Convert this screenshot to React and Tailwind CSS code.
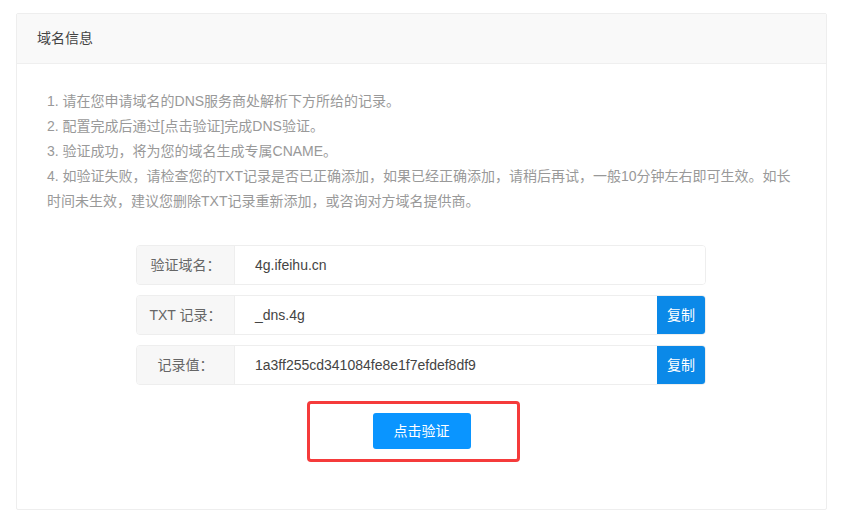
import React from "react";

const steps = [
  "1. 请在您申请域名的DNS服务商处解析下方所给的记录。",
  "2. 配置完成后通过[点击验证]完成DNS验证。",
  "3. 验证成功，将为您的域名生成专属CNAME。",
  "4. 如验证失败，请检查您的TXT记录是否已正确添加，如果已经正确添加，请稍后再试，一般10分钟左右即可生效。如长时间未生效，建议您删除TXT记录重新添加，或咨询对方域名提供商。",
];

const records = [
  { label: "验证域名：", value: "4g.ifeihu.cn", copy: false },
  { label: "TXT 记录：", value: "_dns.4g", copy: true },
  { label: "记录值：", value: "1a3ff255cd341084fe8e1f7efdef8df9", copy: true },
];

function RecordRow({ label, value, copy }) {
  return (
    <div className="flex h-[40px] rounded-[4px] border border-[#eeeeee] overflow-hidden">
      <div className="w-[98px] shrink-0 flex items-center justify-center bg-[#f7f7f7] border-r border-[#eeeeee] text-[14px] text-[#666]">
        {label}
      </div>
      <div className="flex-1 flex items-center pl-[20px] text-[14px] text-[#444] bg-white">
        {value}
      </div>
      {copy && (
        <button className="w-[48px] shrink-0 bg-[#0b89e8] text-white text-[14px]">
          复制
        </button>
      )}
    </div>
  );
}

export default function App() {
  return (
    <div
      className="min-h-screen bg-white pt-[13px] pl-[16px]"
      style={{ fontFamily: '"Liberation Sans", "Noto Sans CJK SC", sans-serif' }}
    >
      <div className="w-[811px] border border-[#eeeeee] rounded-[2px]">
        <div className="h-[50px] flex items-center pl-[20px] bg-[#f9f9f9] border-b border-[#efefef] text-[14px] text-[#444]">
          域名信息
        </div>

        <div className="pt-[25px] pb-[60px]">
          <div className="pl-[30px] pr-[28px] text-[14px] leading-[25px] text-[#999]">
            {steps.map((s) => (
              <p key={s}>{s}</p>
            ))}
          </div>

          <div className="w-[570px] ml-[119px] mt-[31px] flex flex-col gap-[10px]">
            {records.map((r) => (
              <RecordRow key={r.label} {...r} />
            ))}
          </div>

          <div className="flex justify-center mt-[28px]">
            <div className="relative">
              <button className="w-[98px] h-[36px] rounded-[3px] bg-[#0a95ff] text-white text-[14px]">
                点击验证
              </button>
              {/* red highlight frame around the verify button */}
              <div className="absolute top-[-12px] bottom-[-13px] left-[-66px] right-[-49px] border-[3px] border-[#f53b3b] rounded-[4px] pointer-events-none" />
            </div>
          </div>
        </div>
      </div>
    </div>
  );
}
